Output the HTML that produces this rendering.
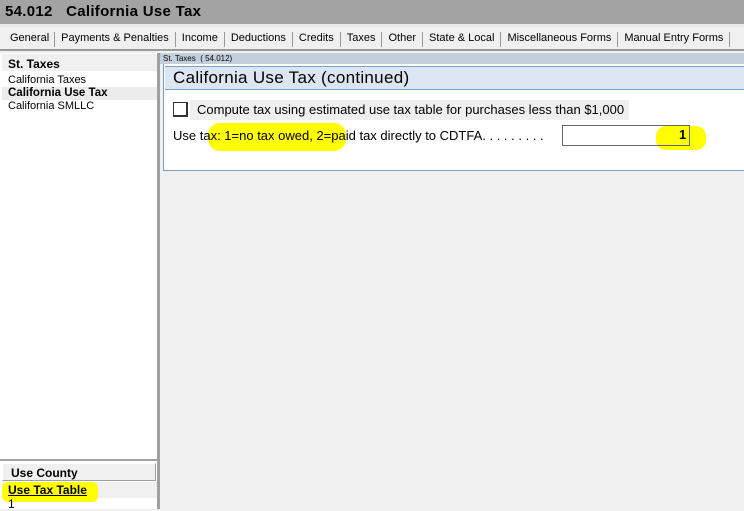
<!DOCTYPE html>
<html><head><style>
*{margin:0;padding:0;box-sizing:border-box}
body{width:744px;height:509px;overflow:hidden;background:#f0f0f0;font-family:"Liberation Sans",sans-serif;font-size:12px;color:#000;position:relative}
.a{position:absolute}
.hl{position:absolute;background:#ffff00;border-radius:6px}
</style></head><body>
<div class="a" style="left:0;top:0;width:744px;height:24px;background:#a3a3a3"></div>
<div class="a" style="left:5px;top:3px;font-size:15px;font-weight:bold;letter-spacing:0.3px">54.012&nbsp;&nbsp;&nbsp;California Use Tax</div>
<div class="a" style="left:0;top:24px;width:744px;height:3px;background:#e8e8e8"></div>
<div class="a" style="left:0;top:49px;width:744px;height:2px;background:#9a9a9a"></div>
<div class="a" style="left:0;top:32px;height:15px;display:flex;font-size:11px;white-space:nowrap">
<span style="padding:0 5px 0 10px;border-right:1px solid #999">General</span>
<span style="padding:0 6px 0 6px">Payments &amp; Penalties</span>
<span style="padding:0 6px;border-left:1px solid #999">Income</span>
<span style="padding:0 6px;border-left:1px solid #999">Deductions</span>
<span style="padding:0 6px;border-left:1px solid #999">Credits</span>
<span style="padding:0 6px;border-left:1px solid #999">Taxes</span>
<span style="padding:0 6px;border-left:1px solid #999">Other</span>
<span style="padding:0 6px;border-left:1px solid #999">State &amp; Local</span>
<span style="padding:0 6px;border-left:1px solid #999">Miscellaneous Forms</span>
<span style="padding:0 6px;border-left:1px solid #999">Manual Entry Forms</span>
<span style="border-left:1px solid #999"></span>
</div>
<!-- left panel -->
<div class="a" style="left:0;top:53px;width:157px;height:456px;background:#fff"></div>
<div class="a" style="left:157px;top:53px;width:3px;height:456px;background:#a0a0a0"></div>
<div class="a" style="left:2px;top:54px;width:155px;height:17px;background:#f0f0f0;font-weight:bold;padding:3px 0 0 6px">St. Taxes</div>
<div class="a" style="left:8px;top:74px;font-size:11px">California Taxes</div>
<div class="a" style="left:2px;top:87px;width:155px;height:13px;background:#ececec"></div>
<div class="a" style="left:8px;top:87px;font-weight:bold;font-size:11.5px">California Use Tax</div>
<div class="a" style="left:8px;top:100px;font-size:11px">California SMLLC</div>
<div class="a" style="left:0;top:459px;width:157px;height:2px;background:#a0a0a0"></div>
<div class="a" style="left:2px;top:463px;width:154px;height:18px;background:#f0f0f0;border:1px solid #a0a0a0;border-top-color:#fff;border-left-color:#fff;font-weight:bold;padding:2px 0 0 8px">Use County</div>
<div class="a" style="left:2px;top:482px;width:155px;height:16px;background:#f0f0f0"></div>
<div class="hl" style="left:2px;top:482px;width:96px;height:20px"></div>
<div class="a" style="left:8px;top:483px;font-weight:bold;text-decoration:underline">Use Tax Table</div>
<div class="a" style="left:8px;top:497px">1</div>
<!-- main -->
<div class="a" style="left:160px;top:53px;width:584px;height:11px;background:#c3cfdb;font-size:8px;padding:1px 0 0 3px">St. Taxes&nbsp;&nbsp;( 54.012)</div>
<div class="a" style="left:163px;top:64px;width:581px;height:107px;background:#fff;border-left:1px solid #7a9cc6;border-bottom:1px solid #7a9cc6"></div>
<div class="a" style="left:165px;top:66px;width:579px;height:24px;background:#dce6f0;border-top:1px solid #7aa0d0;border-bottom:1px solid #7aa0d0;font-size:17px;padding:1px 0 0 8px;letter-spacing:0.3px">California Use Tax (continued)</div>
<div class="a" style="left:190px;top:100px;width:439px;height:20px;background:#efefef"></div>
<div class="a" style="left:173px;top:102px;width:15px;height:15px;border:1px solid #333;border-right:2px solid #333;border-bottom:2px solid #333;background:#fff"></div>
<div class="a" style="left:197px;top:102px;font-size:13px">Compute tax using estimated use tax table for purchases less than $1,000</div>
<div class="hl" style="left:208px;top:123px;width:138px;height:28px;border-radius:12px"></div>
<div class="hl" style="left:656px;top:126px;width:50px;height:24px;border-radius:10px"></div>
<div class="a" style="left:173px;top:128px;font-size:13px;white-space:pre">Use tax: 1=no tax owed, 2=paid tax directly to CDTFA. . . . . . . . .</div>
<div class="a" style="left:562px;top:125px;width:128px;height:21px;border:1px solid #666"></div>
<div class="a" style="left:679px;top:127px;font-size:13px;font-weight:bold">1</div>
</body></html>
